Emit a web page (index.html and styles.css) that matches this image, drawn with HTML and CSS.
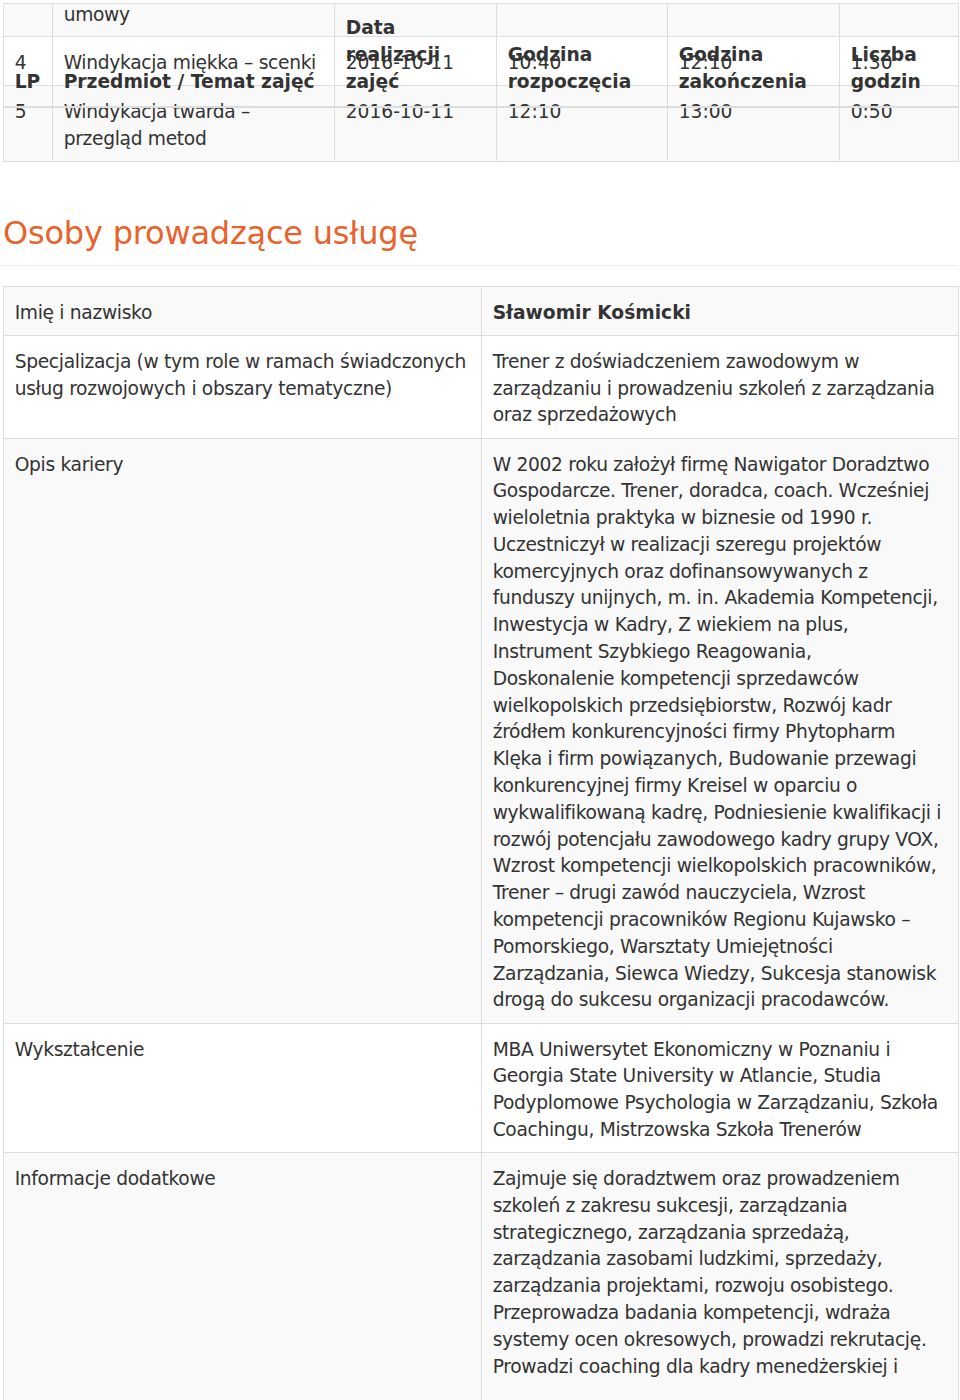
FILE: index.html
```html
<!DOCTYPE html>
<html lang="pl">
<head>
    <meta charset="UTF-8">
    <title>Karta usługi</title>
    <link rel="stylesheet" href="styles.css">
</head>
<body>
    <div class="page">
        <div class="schedule-wrap">
            <table class="table schedule">
                <colgroup>
                    <col class="c-lp"><col class="c-topic"><col class="c-date"><col class="c-start"><col class="c-end"><col class="c-hours">
                </colgroup>
                <tbody>
                    <tr class="odd cut-row">
                        <td></td>
                        <td><div class="cut-text">umowy</div></td>
                        <td></td><td></td><td></td><td></td>
                    </tr>
                    <tr>
                        <td>4</td>
                        <td>Windykacja miękka – scenki</td>
                        <td class="num">2016-10-11</td>
                        <td class="num">10:40</td>
                        <td class="num">12:10</td>
                        <td class="num">1:30</td>
                    </tr>
                    <tr class="odd">
                        <td>5</td>
                        <td>Windykacja twarda – przegląd metod</td>
                        <td class="num">2016-10-11</td>
                        <td class="num">12:10</td>
                        <td class="num">13:00</td>
                        <td class="num">0:50</td>
                    </tr>
                </tbody>
            </table>

            <!-- naglowek tabeli powtorzony na nowej stronie -->
            <table class="table schedule repeat-head">
                <colgroup>
                    <col class="c-lp"><col class="c-topic"><col class="c-date"><col class="c-start"><col class="c-end"><col class="c-hours">
                </colgroup>
                <thead>
                    <tr>
                        <th>LP</th>
                        <th>Przedmiot / Temat zajęć</th>
                        <th>Data realizacji zajęć</th>
                        <th>Godzina rozpoczęcia</th>
                        <th>Godzina zakończenia</th>
                        <th>Liczba godzin</th>
                    </tr>
                </thead>
            </table>
        </div>

        <div class="page-header">
            <h2>Osoby prowadzące usługę</h2>
        </div>

        <table class="table trainer">
            <colgroup>
                <col class="c-label"><col class="c-value">
            </colgroup>
            <tbody>
                <tr class="odd">
                    <td>Imię i nazwisko</td>
                    <td><strong>Sławomir Kośmicki</strong></td>
                </tr>
                <tr>
                    <td>Specjalizacja (w tym role w ramach świadczonych usług rozwojowych i obszary tematyczne)</td>
                    <td>Trener z doświadczeniem zawodowym w zarządzaniu i prowadzeniu szkoleń z zarządzania oraz sprzedażowych</td>
                </tr>
                <tr class="odd">
                    <td>Opis kariery</td>
                    <td>W 2002 roku założył firmę Nawigator Doradztwo Gospodarcze. Trener, doradca, coach. Wcześniej wieloletnia praktyka w biznesie od 1990 r. Uczestniczył w realizacji szeregu projektów komercyjnych oraz dofinansowywanych z funduszy unijnych, m. in. Akademia Kompetencji, Inwestycja w Kadry, Z wiekiem na plus, Instrument Szybkiego Reagowania,<br>Doskonalenie kompetencji sprzedawców wielkopolskich przedsiębiorstw, Rozwój kadr źródłem konkurencyjności firmy Phytopharm<br>Klęka i firm powiązanych, Budowanie przewagi konkurencyjnej firmy Kreisel w oparciu o wykwalifikowaną kadrę, Podniesienie kwalifikacji i rozwój potencjału zawodowego kadry grupy VOX, Wzrost kompetencji wielkopolskich pracowników, Trener – drugi zawód nauczyciela, Wzrost kompetencji pracowników Regionu Kujawsko – Pomorskiego, Warsztaty Umiejętności Zarządzania, Siewca Wiedzy, Sukcesja stanowisk drogą do sukcesu organizacji pracodawców.</td>
                </tr>
                <tr>
                    <td>Wykształcenie</td>
                    <td>MBA Uniwersytet Ekonomiczny w Poznaniu i Georgia State University w Atlancie, Studia Podyplomowe Psychologia w Zarządzaniu, Szkoła Coachingu, Mistrzowska Szkoła Trenerów</td>
                </tr>
                <tr class="odd last-row">
                    <td>Informacje dodatkowe</td>
                    <td>Zajmuje się doradztwem oraz prowadzeniem szkoleń z zakresu sukcesji, zarządzania strategicznego, zarządzania sprzedażą, zarządzania zasobami ludzkimi, sprzedaży, zarządzania projektami, rozwoju osobistego. Przeprowadza badania kompetencji, wdraża systemy ocen okresowych, prowadzi rekrutację. Prowadzi coaching dla kadry menedżerskiej i</td>
                </tr>
            </tbody>
        </table>
    </div>
</body>
</html>
```
FILE: styles.css
```css
body {
    margin: 0;
    background: #fff;
    color: #333;
    font-family: "DejaVu Sans", "Noto Sans", sans-serif;
    font-size: 18.67px;
    line-height: 26.8px;
    letter-spacing: -0.32px;
}

.page {
    width: 955px;
    padding: 3px 0 0 3px;
}

.table {
    width: 955px;
    border-collapse: collapse;
    table-layout: fixed;
    border: 1px solid #ddd;
}

.table td,
.table th {
    padding: 12.67px 10.67px 8.67px;
    border: 1px solid #ddd;
    vertical-align: top;
    text-align: left;
}

.table tr.odd td {
    background: #f9f9f9;
}

.table .num {
    letter-spacing: 0;
}

/* tabela harmonogramu */
.schedule-wrap {
    position: relative;
}

.c-lp { width: 49px; }
.c-topic { width: 282px; }
.c-date { width: 162px; }
.c-start { width: 171px; }
.c-end { width: 172px; }
.c-hours { width: 119px; }

.table .cut-row td {
    padding-top: 0;
    padding-bottom: 7.2px;
}

.cut-text {
    margin-top: -2px;
}

.repeat-head {
    position: absolute;
    top: 0;
    left: 0;
    border-top: none;
    border-bottom: none;
}

.table.repeat-head th {
    padding-top: 12.4px;
    padding-bottom: 10.2px;
    background: transparent;
    font-weight: bold;
    letter-spacing: 0;
    vertical-align: bottom;
    border-top: none;
    border-bottom: 2px solid #ddd;
}

/* naglowek sekcji */
.page-header {
    margin: 54.33px 0 20px -3px;
    padding-bottom: 13.5px;
    border-bottom: 1px solid #eee;
}

.page-header h2 {
    margin: 0 0 0 3px;
    font-size: 32px;
    line-height: 35.2px;
    font-weight: normal;
    letter-spacing: -0.2px;
    color: #e8632b;
}

/* tabela prowadzacego */
.c-label { width: 478px; }
.c-value { width: 477px; }

.trainer strong {
    font-weight: bold;
    letter-spacing: 0;
}

.trainer .last-row td {
    padding-bottom: 40px;
}
```
